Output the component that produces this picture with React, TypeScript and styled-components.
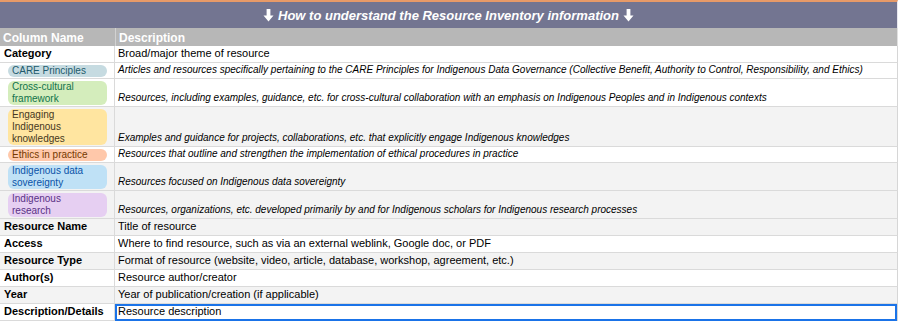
import React from 'react';
import styled, { createGlobalStyle, css } from 'styled-components';

const GlobalStyle = createGlobalStyle`
  body {
    margin: 0;
    background: #ffffff;
    font-family: 'Liberation Sans', Arial, sans-serif;
  }
`;

const Sheet = styled.div`
  width: 898px;
  display: flex;
  flex-direction: column;
  overflow: hidden;
`;

const TitleBar = styled.div`
  box-sizing: border-box;
  height: 28px;
  border-top: 2px solid #e79a68;
  border-right: 1px solid #e8e8ef;
  background: #737591;
  color: #ffffff;
  font-size: 13px;
  font-weight: 700;
  font-style: italic;
  display: flex;
  align-items: center;
  justify-content: center;
  gap: 4px;
`;

const Arrow = styled.svg`
  width: 11px;
  height: 13px;
  display: block;
`;

const HeaderRow = styled.div`
  box-sizing: border-box;
  height: 18px;
  display: grid;
  grid-template-columns: 115px 1fr;
  background: #b7b7b7;
  color: #ffffff;
  font-size: 12px;
  font-weight: 700;
  border-right: 1px solid #e0e0e0;
`;

const HeaderCell = styled.div`
  display: flex;
  align-items: flex-end;
  padding: 0 3px 1px 3px;
  & + & {
    border-left: 1px solid #d2d2d2;
  }
`;

const Row = styled.div<{ h: number; shaded?: boolean }>`
  box-sizing: border-box;
  height: ${({ h }) => h}px;
  display: grid;
  grid-template-columns: 115px 1fr;
  background: ${({ shaded }) => (shaded ? '#f3f3f3' : '#ffffff')};
  border-bottom: 1px solid #dadada;
  border-right: 1px solid #d6d6d6;
`;

const NameCell = styled.div`
  box-sizing: border-box;
  display: flex;
  align-items: flex-end;
  padding: 0 3px 2px 4px;
  border-right: 1px solid #dadada;
  color: #000000;
  font-size: 11px;
  font-weight: 700;
  line-height: 13px;
  white-space: nowrap;
`;

const ChipCell = styled.div`
  box-sizing: border-box;
  display: flex;
  padding: 2px 7px 1px 8px;
  border-right: 1px solid #dadada;
`;

const Chip = styled.div<{ bg: string; fg: string }>`
  flex: 1;
  box-sizing: border-box;
  padding: 0 10px 0 4px;
  border-radius: 6px;
  background: ${({ bg }) => bg};
  color: ${({ fg }) => fg};
  font-size: 10px;
  line-height: 12px;
`;

const DescCell = styled.div<{ italic?: boolean; selected?: boolean }>`
  box-sizing: border-box;
  display: flex;
  align-items: flex-end;
  padding: 0 3px 2px 3px;
  color: #000000;
  white-space: nowrap;
  ${({ italic }) =>
    italic
      ? css`
          font-size: 10px;
          font-style: italic;
          line-height: 12px;
        `
      : css`
          font-size: 11px;
          line-height: 13px;
        `}
  ${({ selected }) =>
    selected &&
    css`
      box-shadow: inset 0 0 0 2px #1a73e8;
      margin-bottom: -1px;
      padding-bottom: 3px;
    `}
`;

const DownArrow = () => (
  <Arrow viewBox="0 0 11 13">
    <path d="M3.6 0h3.8v6.6h3.1L5.5 12.6 0.5 6.6h3.1z" fill="#ffffff" />
  </Arrow>
);

const categories = [
  { label: 'CARE Principles', bg: '#c6dbe1', fg: '#215a6c', h: 16, shaded: false,
    text: 'Articles and resources specifically pertaining to the CARE Principles for Indigenous Data Governance (Collective Benefit, Authority to Control, Responsibility, and Ethics)' },
  { label: 'Cross-cultural framework', bg: '#d4edbc', fg: '#11734b', h: 28, shaded: false,
    text: 'Resources, including examples, guidance, etc. for cross-cultural collaboration with an emphasis on Indigenous Peoples and in Indigenous contexts' },
  { label: 'Engaging Indigenous knowledges', bg: '#ffe5a0', fg: '#473821', h: 40, shaded: true,
    text: 'Examples and guidance for projects, collaborations, etc. that explicitly engage Indigenous knowledges' },
  { label: 'Ethics in practice', bg: '#ffc8aa', fg: '#753800', h: 16, shaded: false,
    text: 'Resources that outline and strengthen the implementation of ethical procedures in practice' },
  { label: 'Indigenous data sovereignty', bg: '#bfe1f6', fg: '#0a53a8', h: 28, shaded: true,
    text: 'Resources focused on Indigenous data sovereignty' },
  { label: 'Indigenous research', bg: '#e6cff2', fg: '#5a3286', h: 28, shaded: true,
    text: 'Resources, organizations, etc. developed primarily by and for Indigenous scholars for Indigenous research processes' },
];

const fields = [
  { name: 'Resource Name', text: 'Title of resource', shaded: true },
  { name: 'Access', text: 'Where to find resource, such as via an external weblink, Google doc, or PDF', shaded: false },
  { name: 'Resource Type', text: 'Format of resource (website, video, article, database, workshop, agreement, etc.)', shaded: true },
  { name: 'Author(s)', text: 'Resource author/creator', shaded: false },
  { name: 'Year', text: 'Year of publication/creation (if applicable)', shaded: true },
  { name: 'Description/Details', text: 'Resource description', shaded: false, selected: true },
];

const App = () => (
  <>
    <GlobalStyle />
    <Sheet>
      <TitleBar>
        <DownArrow />
        How to understand the Resource Inventory information
        <DownArrow />
      </TitleBar>
      <HeaderRow>
        <HeaderCell>Column Name</HeaderCell>
        <HeaderCell>Description</HeaderCell>
      </HeaderRow>
      <Row h={17}>
        <NameCell>Category</NameCell>
        <DescCell>Broad/major theme of resource</DescCell>
      </Row>
      {categories.map((c) => (
        <Row key={c.label} h={c.h} shaded={c.shaded}>
          <ChipCell>
            <Chip bg={c.bg} fg={c.fg}>{c.label}</Chip>
          </ChipCell>
          <DescCell italic>{c.text}</DescCell>
        </Row>
      ))}
      {fields.map((f) => (
        <Row key={f.name} h={17} shaded={f.shaded}>
          <NameCell>{f.name}</NameCell>
          <DescCell selected={f.selected}>{f.text}</DescCell>
        </Row>
      ))}
    </Sheet>
  </>
);

export default App;
